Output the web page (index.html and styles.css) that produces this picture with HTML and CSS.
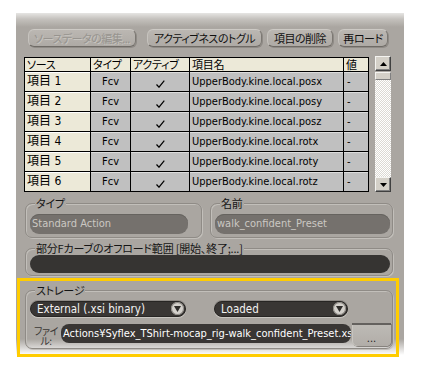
FILE: index.html
```html
<!DOCTYPE html>
<html lang="ja">
<head>
<meta charset="utf-8">
<link rel="stylesheet" href="styles.css">
</head>
<body>
<div class="panel">
  <div class="toolbar">
    <button class="btn disabled b1">ソースデータの編集...</button>
    <button class="btn b2">アクティブネスのトグル</button>
    <button class="btn b3">項目の削除</button>
    <button class="btn b4">再ロード</button>
  </div>

  <div class="list">
    <div class="grid">
      <div class="hd">ソース</div><div class="hd">タイプ</div><div class="hd">アクティブ</div><div class="hd">項目名</div><div class="hd">値</div>

      <div class="src">項目 1</div><div class="c typ">Fcv</div><div class="c chk"><svg width="9" height="8" viewBox="0 0 9 8"><path d="M0.5 4.5 L3 7.2 L8.3 0.6" fill="none" stroke="#000" stroke-width="1.2"/></svg></div><div class="c nm">UpperBody.kine.local.posx</div><div class="c val">-</div>
      <div class="src">項目 2</div><div class="c typ">Fcv</div><div class="c chk"><svg width="9" height="8" viewBox="0 0 9 8"><path d="M0.5 4.5 L3 7.2 L8.3 0.6" fill="none" stroke="#000" stroke-width="1.2"/></svg></div><div class="c nm">UpperBody.kine.local.posy</div><div class="c val">-</div>
      <div class="src">項目 3</div><div class="c typ">Fcv</div><div class="c chk"><svg width="9" height="8" viewBox="0 0 9 8"><path d="M0.5 4.5 L3 7.2 L8.3 0.6" fill="none" stroke="#000" stroke-width="1.2"/></svg></div><div class="c nm">UpperBody.kine.local.posz</div><div class="c val">-</div>
      <div class="src">項目 4</div><div class="c typ">Fcv</div><div class="c chk"><svg width="9" height="8" viewBox="0 0 9 8"><path d="M0.5 4.5 L3 7.2 L8.3 0.6" fill="none" stroke="#000" stroke-width="1.2"/></svg></div><div class="c nm">UpperBody.kine.local.rotx</div><div class="c val">-</div>
      <div class="src">項目 5</div><div class="c typ">Fcv</div><div class="c chk"><svg width="9" height="8" viewBox="0 0 9 8"><path d="M0.5 4.5 L3 7.2 L8.3 0.6" fill="none" stroke="#000" stroke-width="1.2"/></svg></div><div class="c nm">UpperBody.kine.local.roty</div><div class="c val">-</div>
      <div class="src">項目 6</div><div class="c typ">Fcv</div><div class="c chk"><svg width="9" height="8" viewBox="0 0 9 8"><path d="M0.5 4.5 L3 7.2 L8.3 0.6" fill="none" stroke="#000" stroke-width="1.2"/></svg></div><div class="c nm">UpperBody.kine.local.rotz</div><div class="c val">-</div>
    </div>
    <div class="scrollbar">
      <div class="sb-btn"><svg width="7" height="4" viewBox="0 0 7 4"><path d="M3.5 0 L7 4 L0 4 Z" fill="#000"/></svg></div>
      <div class="sb-thumb"></div>
      <div class="sb-track"></div>
      <div class="sb-btn"><svg width="7" height="4" viewBox="0 0 7 4"><path d="M0 0 L7 0 L3.5 4 Z" fill="#000"/></svg></div>
    </div>
  </div>

  <div class="row2">
    <fieldset class="group g-type">
      <legend>タイプ</legend>
      <div class="field grey w-type">Standard Action</div>
    </fieldset>
    <fieldset class="group g-name">
      <legend>名前</legend>
      <div class="field grey w-name">walk_confident_Preset</div>
    </fieldset>
  </div>

  <fieldset class="group g-range">
    <legend>部分Fカーブのオフロード範囲 [開始、終了;...]</legend>
    <div class="field dark"></div>
  </fieldset>

  <fieldset class="group g-storage">
    <legend>ストレージ</legend>
    <div class="selects">
      <div class="select s1">External (.xsi binary)<span class="arrow"><svg width="7" height="6" viewBox="0 0 7 6"><path d="M0 0 L7 0 L3.5 6 Z" fill="#2e2c2a"/></svg></span></div>
      <div class="select s2">Loaded<span class="arrow"><svg width="7" height="6" viewBox="0 0 7 6"><path d="M0 0 L7 0 L3.5 6 Z" fill="#2e2c2a"/></svg></span></div>
    </div>
    <div class="filerow">
      <div class="flabel">ファイ<br>ル:</div>
      <div class="path">Actions¥Syflex_TShirt-mocap_rig-walk_confident_Preset.xsi</div>
      <div class="browse">...</div>
    </div>
  </fieldset>

  <div class="highlight"></div>
</div>
</body>
</html>
```

FILE: styles.css
```css
html, body {
  margin: 0;
  background: #fff;
}
body {
  font-family: "DejaVu Sans Condensed", "Liberation Sans", "Noto Sans CJK JP", sans-serif;
  font-size: 11px;
  color: #000;
}
.btn, .hd, .src, .group legend, .flabel {
  font-feature-settings: "palt";
}
.panel {
  position: relative;
  margin: 13px 0 0 16px;
  width: 388px;
  height: 344px;
  box-sizing: border-box;
  padding: 16px 0 0 8px;
  background: linear-gradient(to bottom, #e6e5e3 0px, #c4c1bd 6px, #aaa6a1 14px, #aaa6a1 326px, #fff 342px);
}

/* toolbar */
.toolbar {
  display: flex;
  height: 18px;
  padding-left: 4px;
}
.btn {
  height: 18px;
  box-sizing: border-box;
  margin: 0 5px 0 0;
  padding: 0;
  font-family: "Noto Sans CJK JP", sans-serif;
  font-size: 11px;
  letter-spacing: -0.5px;
  line-height: 15px;
  color: #111;
  background: linear-gradient(to bottom, #bbb7b2, #aeaaa5);
  border: 1px solid;
  border-color: #cdcac5 #7c7873 #6f6b66 #c6c3be;
  border-radius: 6px;
  box-shadow: 1px 1px 0 #8f8b86;
  white-space: nowrap;
}
.b1 { width: 108px; margin-right: 11px; }
.b2 { width: 115px; }
.b3 { width: 66px; }
.b4 { width: 50px; }
.disabled {
  color: #97948f;
  text-shadow: 1px 1px 0 #c7c4bf;
}

/* list */
.list {
  display: flex;
  margin-top: 10px;
}
.grid {
  display: grid;
  grid-template-columns: 65px 39px 58px 153px 24px;
  grid-template-rows: 13px repeat(6, 19px);
  gap: 1px;
  border: 1px solid #000;
  background: #000;
}
.grid > div {
  white-space: nowrap;
}
.hd {
  background: #ece9d8;
  font-family: "Noto Sans CJK JP", sans-serif;
  font-size: 11px;
  letter-spacing: -0.3px;
  line-height: 13px;
  padding-left: 2px;
}
.src {
  background: #ece9d8;
  font-family: "DejaVu Sans Condensed", "Noto Sans CJK JP", sans-serif;
  font-size: 12px;
  line-height: 19px;
  padding-left: 2px;
  box-shadow: inset 0 1px 0 #fff;
}
.c {
  background: #c0c0c0;
  font-size: 11px;
  line-height: 19px;
  box-shadow: inset 0 1px 0 #dcdcdc;
  overflow: hidden;
}
.typ { text-align: center; }
.chk {
  display: flex;
  justify-content: center;
  align-items: center;
  padding-top: 4px;
  box-sizing: border-box;
}
.nm { padding-left: 2px; }
.val { padding-left: 3px; }

.scrollbar {
  display: flex;
  flex-direction: column;
  width: 16px;
  height: 136px;
  margin: -1px 0 0 6px;
}
.sb-btn {
  height: 15px;
  box-sizing: border-box;
  background: #d4d0c8;
  border: 1px solid;
  border-color: #f4f3f0 #404040 #404040 #f4f3f0;
  box-shadow: inset -1px -1px 0 #808080;
  display: flex;
  justify-content: center;
  align-items: center;
}
.sb-thumb {
  height: 8px;
  margin-top: 1px;
  box-sizing: border-box;
  background: #d4d0c8;
  border: 1px solid;
  border-color: #f4f3f0 #808080 #808080 #f4f3f0;
}
.sb-track {
  flex: 1;
  background: repeating-conic-gradient(#ffffff 0 25%, #dcd9d3 0 50%) 0 0 / 2px 2px;
}

/* groups */
.group {
  margin: 0 0 0 1px;
  padding: 0;
  min-width: 0;
  border: 1px solid #8f8b86;
  box-shadow: inset 1px 1px 0 #c2bfba, 1px 1px 0 #c2bfba;
  border-radius: 7px;
  box-sizing: border-box;
}
.group legend {
  font-family: "Noto Sans CJK JP", sans-serif;
  font-size: 11px;
  letter-spacing: -0.2px;
  line-height: 12px;
  padding: 0 1px;
  margin-left: 5px;
  color: #151515;
  background: #aaa6a1;
}
.row2 {
  display: flex;
  margin-top: 5px;
}
.g-type { width: 177px; padding: 5px 0 3px 4px; }
.g-name { width: 183px; margin-left: 8px; padding: 5px 0 3px 4px; }
.field {
  border-radius: 9px;
  white-space: nowrap;
  overflow: hidden;
}
.grey {
  height: 20px;
  background: #75716d;
  box-shadow: inset 0 1px 0 #66635f;
  color: #cbc8c3;
  font-size: 11px;
  line-height: 20px;
  padding-left: 2px;
  box-sizing: border-box;
}
.w-type { width: 158px; }
.w-name { width: 175px; }

.g-range {
  width: 368px;
  margin-top: 4px;
  padding: 1px 0 2px 4px;
}
.dark {
  width: 360px;
  height: 18px;
  background: #363432;
}

.g-storage {
  width: 368px;
  margin-top: 8px;
  padding: 5px 0 2px 4px;
}
.selects {
  display: flex;
  height: 16px;
}
.select {
  position: relative;
  height: 16px;
  box-sizing: border-box;
  background: #393634;
  border: 1px solid #272523;
  box-shadow: 0 1px 0 #c9c6c1, 0 -1px 0 #8e8a86;
  border-radius: 8px;
  color: #f2f2f2;
  font-family: "DejaVu Sans Condensed", "Liberation Sans", sans-serif;
  font-size: 11.5px;
  line-height: 15px;
  padding-left: 6px;
  white-space: nowrap;
}
.s1 { width: 156px; }
.s2 { width: 134px; margin-left: 28px; }
.arrow {
  position: absolute;
  right: 1px;
  top: 0;
  width: 13px;
  height: 13px;
  border-radius: 50%;
  background: #d3d0cb;
  box-shadow: inset 0 0 0 1px #8a8782;
  display: flex;
  justify-content: center;
  align-items: center;
  padding-top: 1px;
  box-sizing: border-box;
}
.filerow {
  display: flex;
  margin-top: 6px;
  height: 23px;
}
.flabel {
  width: 24px;
  margin-left: 4px;
  font-family: "Noto Sans CJK JP", sans-serif;
  font-size: 10px;
  letter-spacing: -0.5px;
  line-height: 10px;
  color: #3a3835;
  text-align: center;
  padding-top: 3px;
  box-sizing: border-box;
  white-space: nowrap;
}
.path {
  width: 290px;
  height: 19px;
  margin: 1px 0 0 3px;
  box-sizing: border-box;
  background: #393634;
  border-radius: 8px;
  color: #fff;
  font-size: 11px;
  line-height: 19px;
  padding-left: 2px;
  white-space: nowrap;
  overflow: hidden;
}
.browse {
  width: 39px;
  height: 23px;
  margin-left: 1px;
  box-sizing: border-box;
  border-top: 2px solid #64615e;
  background: linear-gradient(to bottom, #bdbab5, #b1ada8);
  border-radius: 0 0 5px 5px;
  box-shadow: 1px 1px 0 #86827d, inset 1px 0 0 #c8c5c0;
  text-align: center;
  font-size: 11px;
  line-height: 11px;
  padding-top: 8px;
  color: #222;
}

.highlight {
  position: absolute;
  left: 1px;
  top: 265px;
  width: 382px;
  height: 79px;
  box-sizing: border-box;
  border: 3px solid #ffcc00;
  pointer-events: none;
}
```
